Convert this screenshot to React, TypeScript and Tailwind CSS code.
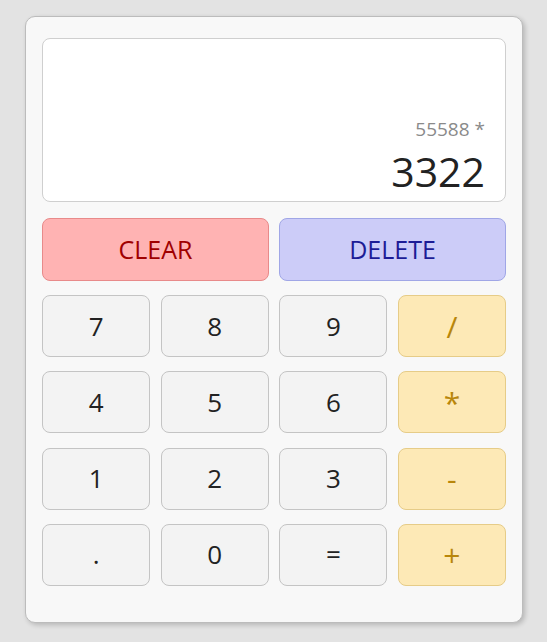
import React from "react"

const rows = [
  ["7", "8", "9", "/"],
  ["4", "5", "6", "*"],
  ["1", "2", "3", "-"],
  [".", "0", "=", "+"],
]

const ops = ["/", "*", "-", "+"]

export default function App() {
  return (
    <div className="min-h-screen bg-[#e3e3e3] pt-4 font-['Open_Sans',sans-serif]">
      <div className="ml-[25px] w-[498px] rounded-[10px] border border-[#bcbcbc] bg-[#f8f8f8] px-4 pt-[21px] pb-9 shadow-[2px_2px_5px_rgba(0,0,0,0.2)]">
        {/* Display */}
        <div className="flex h-[164px] flex-col items-end justify-end rounded-lg border border-[#cfcfcf] bg-white px-5 pb-[2px]">
          <div className="mb-[1px] text-[19px] leading-[26px] text-[#8a8a8a]">55588 *</div>
          <div className="text-[41px] leading-[56px] text-[#222]">3322</div>
        </div>

        <div className="mt-4 grid grid-cols-2 gap-[10px]">
          <button className="h-[63px] rounded-lg border border-[#e88a8a] bg-[#ffb3b3] text-[25px] text-[#a00000]">
            CLEAR
          </button>
          <button className="h-[63px] rounded-lg border border-[#a0a6e6] bg-[#ccccf8] text-[25px] text-[#1c1c96]">
            DELETE
          </button>
        </div>

        <div className="mt-[14px] grid grid-cols-4 gap-x-[10.5px] gap-y-[14.3px]">
          {rows.flat().map((k) =>
            ops.includes(k) ? (
              <button
                key={k}
                className="h-[62px] rounded-lg border border-[#e6cc88] bg-[#fde9b6] text-[30px] text-[#b8860b]"
              >
                {k}
              </button>
            ) : (
              <button
                key={k}
                className="h-[62px] rounded-lg border border-[#c4c4c4] bg-[#f3f3f3] text-[26px] text-[#222]"
              >
                {k}
              </button>
            )
          )}
        </div>
      </div>
    </div>
  )
}
